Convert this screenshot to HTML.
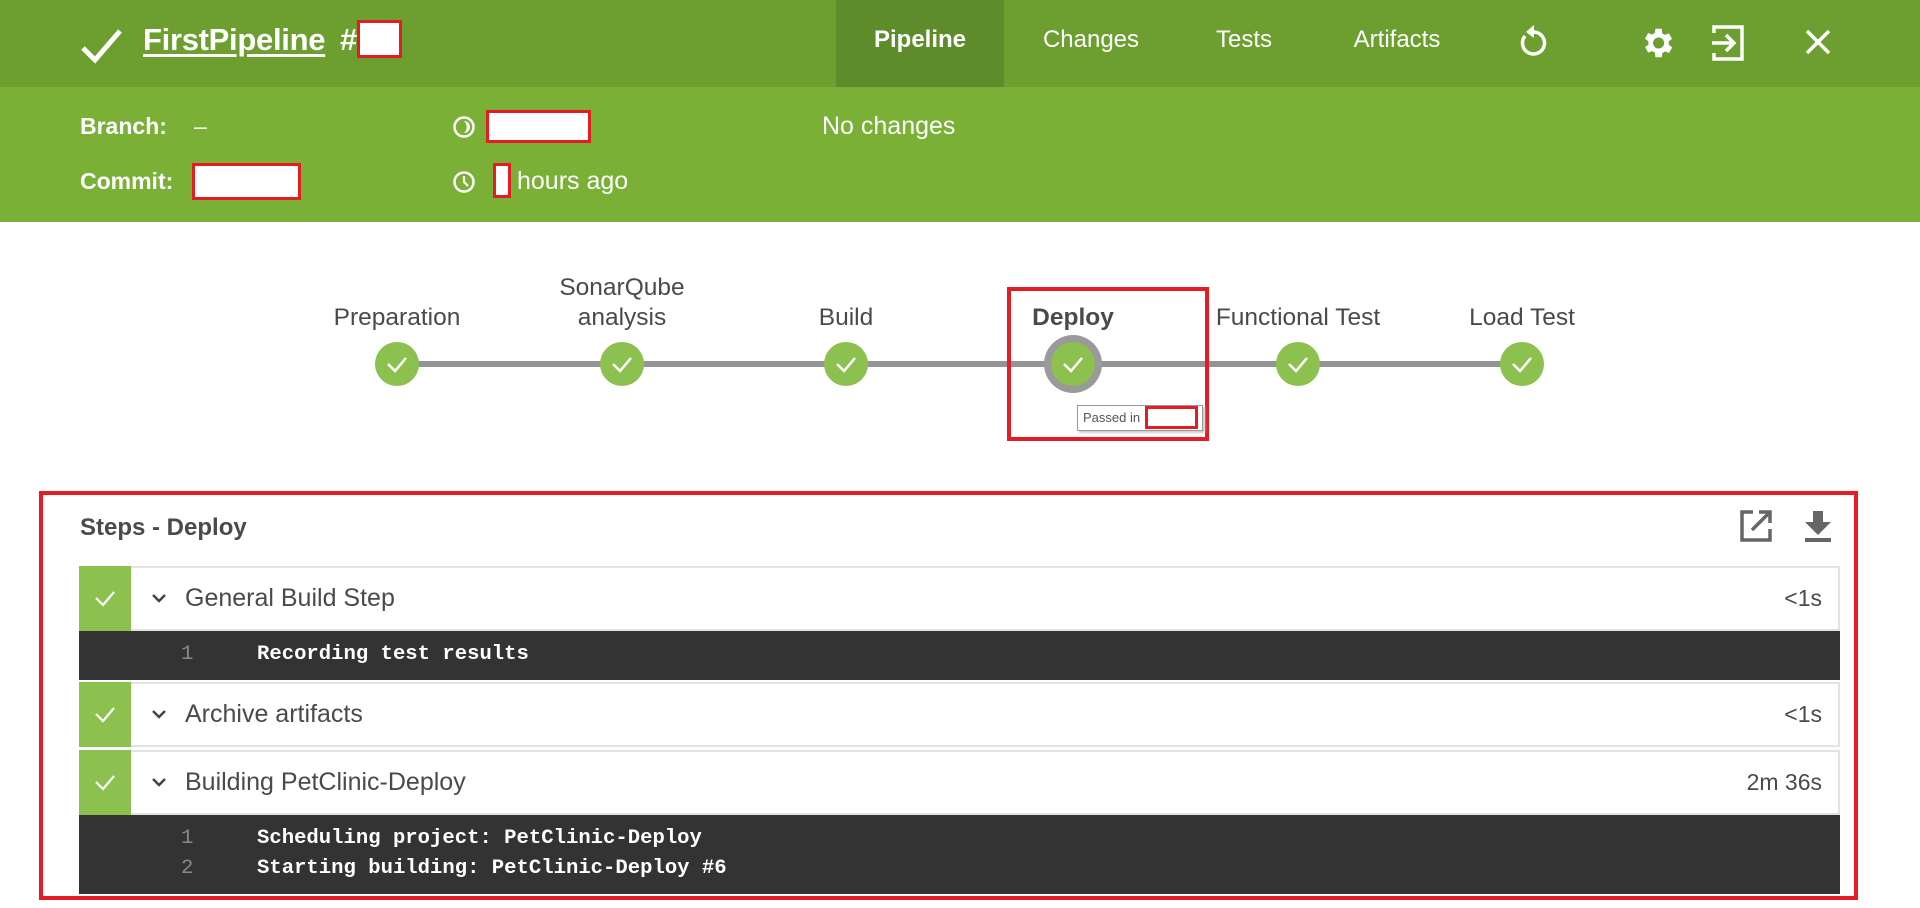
<!DOCTYPE html>
<html><head><meta charset="utf-8"><style>
*{box-sizing:border-box;margin:0;padding:0}
body{width:1920px;height:908px;overflow:hidden;background:#fff;font-family:"Liberation Sans",sans-serif;position:relative;color:#4a4a4a}
.a{position:absolute}
#top{left:0;top:0;width:1920px;height:87px;background:#6c9e30}
#band{left:0;top:87px;width:1920px;height:135px;background:#7ab036}
.w{color:#fff}
.nav{top:0;height:87px;line-height:80px;font-size:24px;color:#fff;text-align:center}
.red{border:3px solid #e51c24;background:#fff}
.lbl{font-size:24.5px;color:#4a4a4a;text-align:center;width:240px;line-height:30px}
.node{width:44px;height:44px;border-radius:50%;background:#8cc04f;top:342px}
.node svg{position:absolute;left:10px;top:11px}
.row{left:79px;width:1761px;height:65px;border:2px solid #e2e2e2;background:#fff}
.row .g{position:absolute;left:-2px;top:-2px;width:52px;height:65px;background:#8cc04f}
.row .t{position:absolute;left:104px;top:0;line-height:61px;font-size:25px;color:#4a4a4a}
.row .d{position:absolute;right:16px;top:0;line-height:61px;font-size:23px;color:#4a4a4a}
.row .c{position:absolute;left:70px;top:22px}
.log{left:79px;width:1761px;background:#333;color:#fff;font-family:"Liberation Mono",monospace;font-weight:bold;font-size:20.6px}
.log div{height:30px;line-height:30px;position:relative}
.log .n{position:absolute;left:102px;color:#888;font-weight:normal}
.log .x{position:absolute;left:178px}
</style></head><body>
<div id="top" class="a"></div>
<div id="band" class="a"></div>
<svg class="a" style="left:80px;top:26px" width="44" height="40"><path d="M3 22 L15 34 L40 5" stroke="#fff" stroke-width="5" fill="none"/></svg>
<div class="a w" style="left:143px;top:22px;font-size:31px;font-weight:bold;text-decoration:underline;text-decoration-thickness:3px;text-underline-offset:4px;letter-spacing:-0.3px">FirstPipeline</div>
<div class="a w" style="left:340px;top:22px;font-size:31px;font-weight:bold">#</div>
<div class="a red" style="left:357px;top:20px;width:45px;height:38px"></div>
<div class="a" style="left:836px;top:0;width:168px;height:87px;background:#5f8c2b"></div>
<div class="a nav" style="left:836px;width:168px;font-weight:bold">Pipeline</div>
<div class="a nav" style="left:1030px;width:122px">Changes</div>
<div class="a nav" style="left:1200px;width:88px">Tests</div>
<div class="a nav" style="left:1335px;width:124px">Artifacts</div>
<svg class="a" style="left:1516px;top:22px" width="34" height="40" viewBox="0 0 34 40"><path d="M9 14 A11 11 0 1 0 17 10" stroke="#fff" stroke-width="3.5" fill="none"/><path d="M18 3 L10 10 L18 16 Z" fill="#fff"/></svg>
<svg class="a" style="left:1638px;top:24px" width="38" height="38" viewBox="0 0 24 24"><path fill="#fff" d="M19.4 13a7.6 7.6 0 0 0 0-2l2.1-1.6-2-3.5-2.5 1a7 7 0 0 0-1.7-1L15 3h-4l-.4 2.7a7 7 0 0 0-1.7 1l-2.5-1-2 3.5L6.6 11a7.6 7.6 0 0 0 0 2l-2.1 1.6 2 3.5 2.5-1a7 7 0 0 0 1.7 1L11 21h4l.4-2.7a7 7 0 0 0 1.7-1l2.5 1 2-3.5zM13 15.5A3.5 3.5 0 1 1 13 8.5a3.5 3.5 0 0 1 0 7z"/></svg>
<svg class="a" style="left:1710px;top:23px" width="36" height="40" viewBox="0 0 36 40"><path d="M4 10 V4 H32 V36 H4 V30" stroke="#fff" stroke-width="3.5" fill="none"/><path d="M2 20 H24 M16 12 L24 20 L16 28" stroke="#fff" stroke-width="3.5" fill="none"/></svg>
<svg class="a" style="left:1804px;top:28px" width="28" height="28"><path d="M3 3 L25 25 M25 3 L3 25" stroke="#fff" stroke-width="3.5"/></svg>

<div class="a w" style="left:80px;top:113px;font-size:23px;font-weight:bold">Branch:</div>
<div class="a w" style="left:194px;top:113px;font-size:23px">–</div>
<div class="a w" style="left:80px;top:168px;font-size:23px;font-weight:bold">Commit:</div>
<div class="a red" style="left:192px;top:163px;width:109px;height:37px"></div>
<svg class="a" style="left:452px;top:115px" width="24" height="24"><circle cx="12" cy="12" r="9.5" stroke="#fff" stroke-width="2.5" fill="none"/><path d="M12 6 A6 6 0 0 1 12 18 A8 8 0 0 0 12 6Z" fill="#fff"/></svg>
<div class="a red" style="left:486px;top:110px;width:105px;height:33px"></div>
<svg class="a" style="left:452px;top:170px" width="24" height="24"><circle cx="12" cy="12" r="9.5" stroke="#fff" stroke-width="2.5" fill="none"/><path d="M12 6 V12 L16 16" stroke="#fff" stroke-width="2.2" fill="none"/></svg>
<div class="a red" style="left:493px;top:163px;width:18px;height:35px"></div>
<div class="a w" style="left:517px;top:167px;font-size:25px">hours ago</div>
<div class="a w" style="left:822px;top:112px;font-size:25px">No changes</div>

<div class="a" style="left:397px;top:361px;width:1125px;height:6px;background:#949494"></div>
<div class="a lbl" style="left:277px;top:303px">Preparation</div>
<div class="a lbl" style="left:502px;top:273px">SonarQube<br>analysis</div>
<div class="a lbl" style="left:726px;top:303px">Build</div>
<div class="a lbl" style="left:953px;top:303px;font-weight:bold">Deploy</div>
<div class="a lbl" style="left:1178px;top:303px">Functional Test</div>
<div class="a lbl" style="left:1402px;top:303px">Load Test</div>
<div class="a" style="left:1044px;top:335px;width:58px;height:58px;border-radius:50%;background:#9a9a9a"></div>
<div class="a node" style="left:375px"><svg width="24" height="22"><path d="M3 11 L10 18 L21 5" stroke="#fff" stroke-width="2.5" fill="none"/></svg></div>
<div class="a node" style="left:600px"><svg width="24" height="22"><path d="M3 11 L10 18 L21 5" stroke="#fff" stroke-width="2.5" fill="none"/></svg></div>
<div class="a node" style="left:824px"><svg width="24" height="22"><path d="M3 11 L10 18 L21 5" stroke="#fff" stroke-width="2.5" fill="none"/></svg></div>
<div class="a node" style="left:1051px;width:44px"><svg width="24" height="22"><path d="M3 11 L10 18 L21 5" stroke="#fff" stroke-width="2.5" fill="none"/></svg></div>
<div class="a node" style="left:1276px"><svg width="24" height="22"><path d="M3 11 L10 18 L21 5" stroke="#fff" stroke-width="2.5" fill="none"/></svg></div>
<div class="a node" style="left:1500px"><svg width="24" height="22"><path d="M3 11 L10 18 L21 5" stroke="#fff" stroke-width="2.5" fill="none"/></svg></div>
<div class="a" style="left:1007px;top:287px;width:202px;height:154px;border:4px solid #e51c24"></div>
<div class="a" style="left:1077px;top:405px;width:126px;height:26px;border:1px solid #999;background:#fff;font-size:13px;line-height:24px;padding-left:5px;color:#555;box-shadow:2px 2px 2px #ccc">Passed in</div>
<div class="a red" style="left:1145px;top:406px;width:53px;height:23px"></div>

<div class="a" style="left:39px;top:491px;width:1819px;height:409px;border:4px solid #e51c24"></div>
<div class="a" style="left:80px;top:514px;font-size:24px;font-weight:bold;color:#4a4a4a">Steps - Deploy</div>
<svg class="a" style="left:1739px;top:509px" width="34" height="34"><path d="M14 3 H3 V31 H31 V20" stroke="#666" stroke-width="3.5" fill="none"/><path d="M13 21 L31 3 M20 3 H31 V14" stroke="#666" stroke-width="3.5" fill="none"/></svg>
<svg class="a" style="left:1803px;top:509px" width="30" height="34"><path d="M10 2 H20 V13 H28 L15 26 L2 13 H10Z" fill="#666"/><rect x="2" y="29" width="26" height="4" fill="#666"/></svg>

<div class="a row" style="top:566px"><div class="g"><svg style="position:absolute;left:14px;top:21px" width="24" height="22"><path d="M3 11 L10 18 L21 5" stroke="#fff" stroke-width="2.2" fill="none"/></svg></div><svg class="c" width="16" height="16"><path d="M2 5 L8 11 L14 5" stroke="#444" stroke-width="2.5" fill="none"/></svg><div class="t">General Build Step</div><div class="d">&lt;1s</div></div>
<div class="a log" style="top:631px;height:49px;padding-top:9px"><div><span class="n">1</span><span class="x">Recording test results</span></div></div>
<div class="a row" style="top:682px"><div class="g"><svg style="position:absolute;left:14px;top:21px" width="24" height="22"><path d="M3 11 L10 18 L21 5" stroke="#fff" stroke-width="2.2" fill="none"/></svg></div><svg class="c" width="16" height="16"><path d="M2 5 L8 11 L14 5" stroke="#444" stroke-width="2.5" fill="none"/></svg><div class="t">Archive artifacts</div><div class="d">&lt;1s</div></div>
<div class="a row" style="top:750px"><div class="g"><svg style="position:absolute;left:14px;top:21px" width="24" height="22"><path d="M3 11 L10 18 L21 5" stroke="#fff" stroke-width="2.2" fill="none"/></svg></div><svg class="c" width="16" height="16"><path d="M2 5 L8 11 L14 5" stroke="#444" stroke-width="2.5" fill="none"/></svg><div class="t">Building PetClinic-Deploy</div><div class="d">2m 36s</div></div>
<div class="a log" style="top:815px;height:79px;padding-top:9px"><div><span class="n">1</span><span class="x">Scheduling project: PetClinic-Deploy</span></div><div><span class="n">2</span><span class="x">Starting building: PetClinic-Deploy #6</span></div></div>
</body></html>
